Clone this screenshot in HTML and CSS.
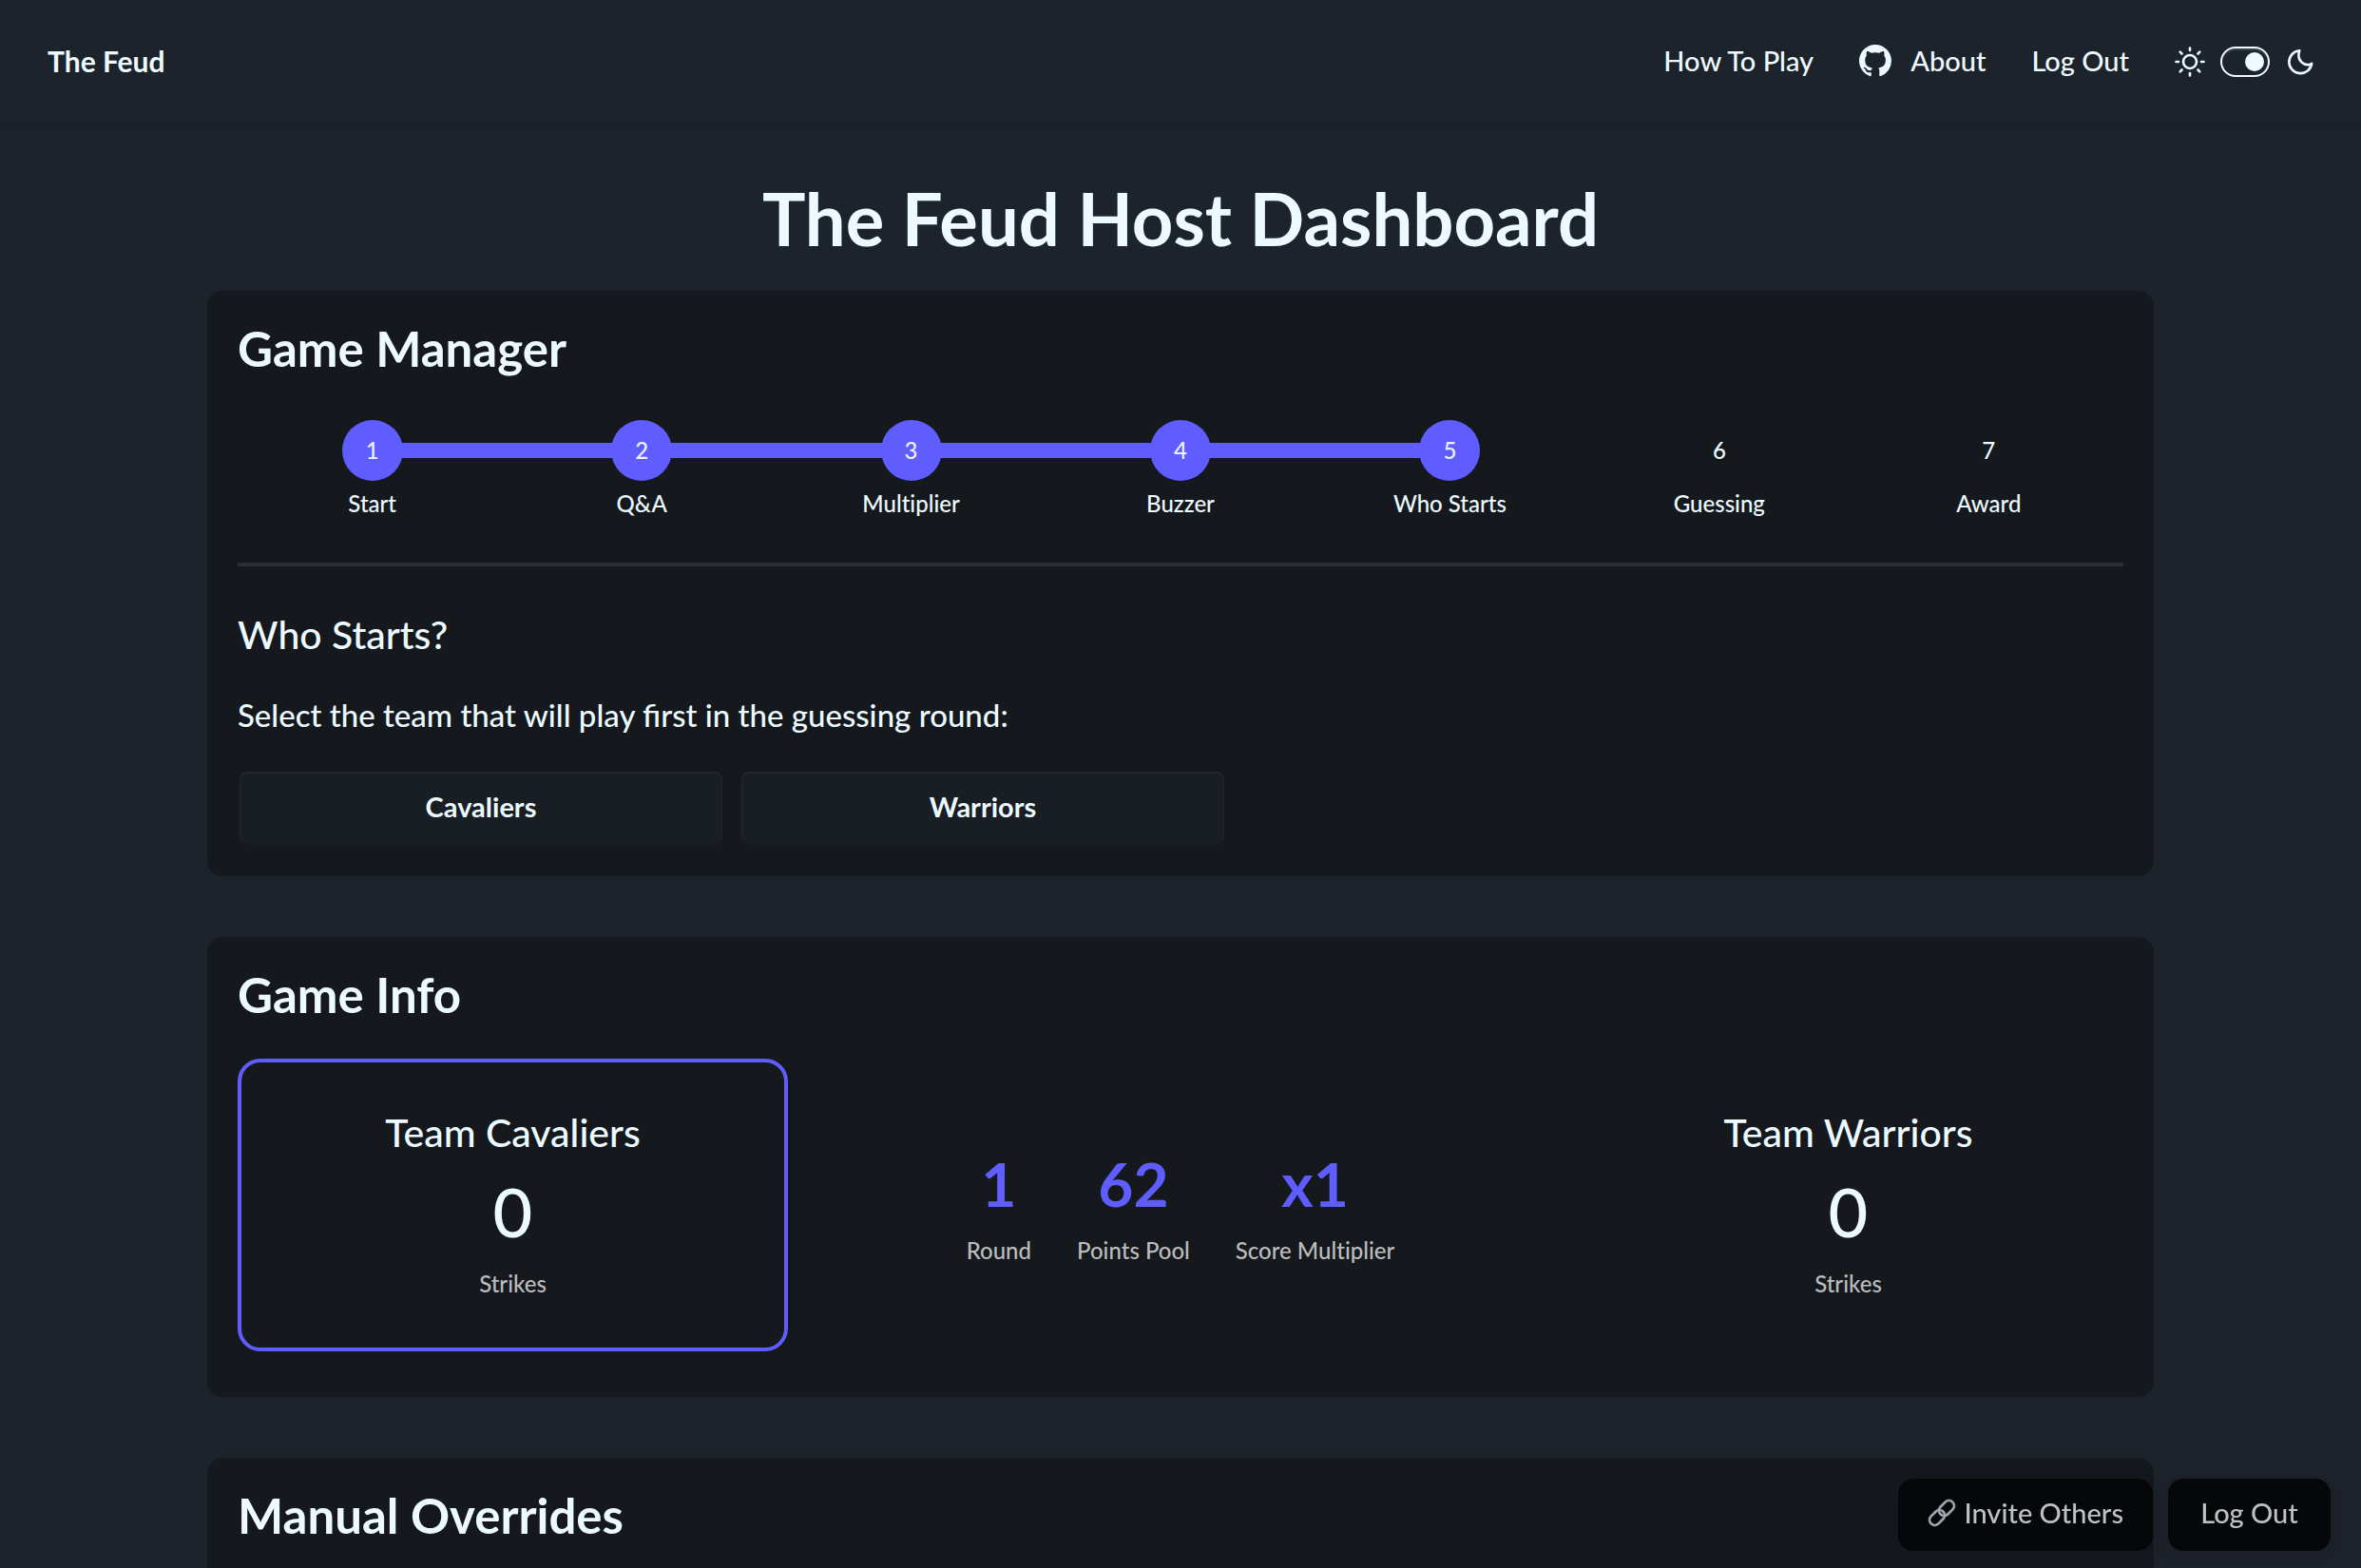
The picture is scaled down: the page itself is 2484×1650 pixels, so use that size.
FILE: index.html
```html
<!DOCTYPE html>
<html lang="en">
<head>
<meta charset="utf-8">
<meta name="viewport" content="width=device-width, initial-scale=1">
<title>The Feud Host Dashboard</title>
<link rel="stylesheet" href="styles.css">
</head>
<body>
<header class="navbar">
  <a class="brand" href="#">The Feud</a>
  <nav class="nav-links">
    <a class="nav-link" href="#">How To Play</a>
    <a class="nav-link nav-about" href="#">
      <svg class="icon-github" viewBox="0 0 16 16" fill="currentColor" aria-hidden="true"><path d="M8 0C3.58 0 0 3.58 0 8c0 3.54 2.29 6.53 5.47 7.59.4.07.55-.17.55-.38 0-.19-.01-.82-.01-1.49-2.01.37-2.53-.49-2.69-.94-.09-.23-.48-.94-.82-1.13-.28-.15-.68-.52-.01-.53.63-.01 1.08.58 1.23.82.72 1.21 1.87.87 2.33.66.07-.52.28-.87.51-1.07-1.78-.2-3.64-.89-3.64-3.95 0-.87.31-1.59.82-2.15-.08-.2-.36-1.02.08-2.12 0 0 .67-.21 2.2.82.64-.18 1.32-.27 2-.27s1.36.09 2 .27c1.53-1.04 2.2-.82 2.2-.82.44 1.1.16 1.92.08 2.12.51.56.82 1.27.82 2.15 0 3.07-1.87 3.75-3.65 3.95.29.25.54.73.54 1.48 0 1.07-.01 1.93-.01 2.2 0 .21.15.46.55.38A8.01 8.01 0 0 0 16 8c0-4.42-3.58-8-8-8z"/></svg>
      <span>About</span>
    </a>
    <a class="nav-link" href="#">Log Out</a>
    <label class="theme">
      <svg class="icon-sun" viewBox="0 0 32 32" fill="none" stroke="currentColor" stroke-width="2.6" stroke-linecap="round" aria-hidden="true"><circle cx="16" cy="16" r="7"/><path d="M16 1.5v2.5M16 28v2.5M1.500 16h2.500M28 16h2.500M5.700 5.700l1.800 1.800M24.500 24.500l1.800 1.800M5.700 26.300l1.800-1.800M24.500 7.500l1.800-1.800"/></svg>
      <input class="toggle" type="checkbox" aria-label="Dark theme" checked>
      <svg class="icon-moon" viewBox="0 0 32 32" fill="none" stroke="currentColor" stroke-width="2.600" stroke-linejoin="round" aria-hidden="true"><path d="M15.300 4.200A12 12 0 1 0 28.200 17.800C21.500 21.800 11.500 15.500 15.300 4.200z"/></svg>
    </label>
  </nav>
</header>

<main class="page">
  <h1 class="page-title">The Feud Host Dashboard</h1>

  <section class="card">
    <h2 class="card-title">Game Manager</h2>
    <ol class="steps">
      <li class="step done"><span class="dot">1</span><span class="step-label">Start</span></li>
      <li class="step done"><span class="dot">2</span><span class="step-label">Q&amp;A</span></li>
      <li class="step done"><span class="dot">3</span><span class="step-label">Multiplier</span></li>
      <li class="step done"><span class="dot">4</span><span class="step-label">Buzzer</span></li>
      <li class="step done"><span class="dot">5</span><span class="step-label">Who Starts</span></li>
      <li class="step"><span class="dot">6</span><span class="step-label">Guessing</span></li>
      <li class="step"><span class="dot">7</span><span class="step-label">Award</span></li>
    </ol>
    <hr class="rule">
    <h3 class="step-title">Who Starts?</h3>
    <p class="prompt">Select the team that will play first in the guessing round:</p>
    <div class="choices">
      <button class="choice" type="button">Cavaliers</button>
      <button class="choice" type="button">Warriors</button>
    </div>
  </section>

  <section class="card card-info">
    <h2 class="card-title">Game Info</h2>
    <div class="info">
      <article class="panel team active">
        <h3 class="team-name">Team Cavaliers</h3>
        <p class="score">0</p>
        <p class="caption">Strikes</p>
      </article>
      <dl class="panel stats">
        <div class="stat"><dd class="value">1</dd><dt class="caption">Round</dt></div>
        <div class="stat"><dd class="value">62</dd><dt class="caption">Points Pool</dt></div>
        <div class="stat"><dd class="value">x1</dd><dt class="caption">Score Multiplier</dt></div>
      </dl>
      <article class="panel team">
        <h3 class="team-name">Team Warriors</h3>
        <p class="score">0</p>
        <p class="caption">Strikes</p>
      </article>
    </div>
  </section>

  <section class="card card-overrides">
    <h2 class="card-title">Manual Overrides</h2>
  </section>
</main>

<div class="dock">
  <button class="dock-btn" type="button">
    <svg class="icon-link" viewBox="0 0 30 30" fill="none" aria-hidden="true"><g transform="rotate(-45 15 15)"><rect x="-1" y="9.500" width="18" height="11" rx="5.500" stroke="#7d858d" stroke-width="3"/><rect x="13" y="9.500" width="18" height="11" rx="5.500" stroke="#7d858d" stroke-width="3"/><rect x="-1" y="9.500" width="18" height="11" rx="5.500" stroke="#b4bcc4" stroke-width="1"/><rect x="13" y="9.500" width="18" height="11" rx="5.500" stroke="#b4bcc4" stroke-width="1"/></g></svg>
    <span>Invite Others</span>
  </button>
  <button class="dock-btn" type="button">Log Out</button>
</div>
</body>
</html>
```

FILE: styles.css
```css
:root {
  --base-100: #1d232a;
  --base-200: #191e24;
  --base-300: #15191e;
  --content: #ecf9ff;
  --muted: #bbbcbd;
  --primary: #605dff;
}

* {
  box-sizing: border-box;
  margin: 0;
  padding: 0;
}

html {
  scrollbar-width: none;
}

body {
  background: var(--base-100);
  color: var(--content);
  font: 500 29px/32px Lato, "Liberation Sans", sans-serif;
}

button {
  font: inherit;
  color: inherit;
  cursor: pointer;
}

a {
  color: inherit;
  text-decoration: none;
}

.navbar {
  display: flex;
  align-items: center;
  justify-content: space-between;
  height: 130px;
  padding: 0 48px;
  box-shadow: 0 2px 6px rgba(30, 20, 40, 0.3);
}

.brand {
  padding: 0 2px 3px;
  font-size: 30px;
  font-weight: 700;
}

.nav-links {
  display: flex;
  align-items: center;
  gap: 48px;
}

.nav-link {
  padding-bottom: 2px;
}

.nav-about {
  display: flex;
  align-items: center;
  gap: 20px;
}

.icon-github {
  width: 34px;
  height: 34px;
}

.theme {
  display: flex;
  align-items: center;
  gap: 16px;
}

.icon-sun,
.icon-moon {
  width: 32px;
  height: 32px;
}

.toggle {
  appearance: none;
  display: flex;
  align-items: center;
  justify-content: flex-end;
  width: 52px;
  height: 32px;
  padding: 0 4px;
  border: 2px solid var(--content);
  border-radius: 16px;
  box-shadow: inset 0 2px 1px rgba(236, 249, 255, 0.15);
}

.toggle::before {
  content: "";
  width: 20px;
  height: 20px;
  border-radius: 50%;
  background: var(--content);
}

.page {
  max-width: 2048px;
  margin: 0 auto;
  padding-top: 60px;
}

.page-title {
  margin-bottom: 36px;
  font-size: 76px;
  font-weight: 700;
  line-height: 80px;
  text-align: center;
}

.card {
  margin-bottom: 64px;
  padding: 32px;
  border-radius: 16px;
  background: var(--base-300);
}

.card-info {
  padding-bottom: 48px;
}

.card-overrides {
  margin-bottom: 0;
  padding-bottom: 96px;
}

.card-title {
  font-size: 51px;
  font-weight: 700;
  line-height: 58px;
}

.steps {
  display: grid;
  grid-template-columns: repeat(7, 1fr);
  margin: 46px 0;
  list-style: none;
}

.step {
  position: relative;
  display: flex;
  flex-direction: column;
  align-items: center;
  gap: 8px;
  font-size: 24px;
  font-variant-ligatures: none;
}

.step.done + .step.done::before {
  content: "";
  position: absolute;
  top: 24px;
  right: 50%;
  width: 100%;
  height: 16px;
  background: var(--primary);
}

.dot {
  position: relative;
  z-index: 1;
  display: grid;
  place-items: center;
  width: 64px;
  height: 64px;
  border-radius: 50%;
}

.step.done .dot {
  background: var(--primary);
  color: #edf1fe;
}

.rule {
  height: 4px;
  border: 0;
  background: #2b2f33;
}

.step-title {
  margin-top: 48px;
  font-size: 41px;
  font-weight: 500;
  line-height: 48px;
}

.prompt {
  margin: 40px 0 38px;
  font-size: 33px;
  line-height: 40px;
}

.choices {
  display: flex;
  gap: 20px;
  padding: 2px;
}

.choice {
  width: 508px;
  height: 76px;
  padding-bottom: 2px;
  border: 1px solid #23282c;
  border-bottom-color: transparent;
  border-radius: 8px;
  background: var(--base-200);
  box-shadow: inset 0 1px 0 #23282c, 0 6px 6px -2px rgba(25, 30, 36, 0.6);
  font-weight: 700;
}

.info {
  display: grid;
  grid-template-columns: 1fr 640px 1fr;
  gap: 93px;
  margin-top: 38px;
}

.panel {
  display: flex;
  border-radius: 24px;
  box-shadow: 0 8px 16px rgba(0, 0, 0, 0.06);
}

.team {
  flex-direction: column;
  align-items: center;
  padding: 50px 32px 51px;
  border: 4px solid transparent;
}

.team.active {
  border-color: var(--primary);
}

.team-name {
  font-size: 41px;
  font-weight: 500;
  line-height: 48px;
}

.score {
  margin: 18px 0 21px;
  font-size: 72px;
  line-height: 80px;
}

.caption {
  color: var(--muted);
  font-size: 24px;
  font-variant-ligatures: none;
}

.stats {
  align-items: center;
  justify-content: center;
  gap: 48px;
  padding-top: 5px;
}

.stat {
  display: flex;
  flex-direction: column;
  align-items: center;
  gap: 18px;
}

.value {
  color: var(--primary);
  font-size: 64px;
  font-weight: 700;
  line-height: 72px;
}

.dock {
  position: fixed;
  right: 32px;
  bottom: 18px;
  z-index: 2;
  display: flex;
  gap: 16px;
}

.dock-btn {
  display: flex;
  align-items: center;
  justify-content: center;
  gap: 8px;
  min-width: 171px;
  height: 76px;
  padding: 0 31px 4px;
  border: 0;
  border-radius: 16px;
  background: #060709;
  box-shadow: 0 6px 16px rgba(28, 16, 36, 0.3);
  color: #bfc0c1;
}

.icon-link {
  width: 30px;
  height: 30px;
}
```
